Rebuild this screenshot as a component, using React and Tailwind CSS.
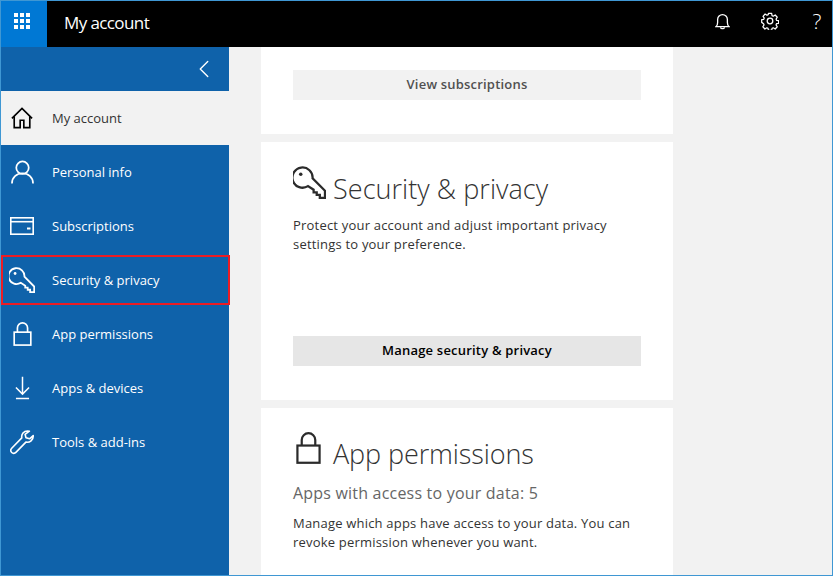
import { ChevronLeft } from "lucide-react";

const HomeIcon = ({ className }) => (
    <svg viewBox="0 0 24 24" className={className} fill="none" stroke="currentColor" strokeWidth="1.8">
        <path d="M1 12.5 12 1.500l11 11" />
        <path d="M3.500 10v12.500h6.500v-8h4v8h6.500V10" />
    </svg>
);

const UserIcon = ({ className }) => (
    <svg viewBox="0 0 24 24" className={className} fill="none" stroke="currentColor" strokeWidth="1.8">
        <circle cx="12" cy="7.500" r="6.500" />
        <path d="M1 24c0-6.500 4.800-10.500 11-10.500S23 17.500 23 24" />
    </svg>
);

const CardIcon = ({ className }) => (
    <svg viewBox="0 0 24 18" className={className} fill="none" stroke="currentColor" strokeWidth="1.6">
        <rect x="0.8" y="0.8" width="22.4" height="16.4" />
        <path d="M1 4.700h22" />
        <path d="M17 11.500h3.500" strokeWidth="2" />
    </svg>
);

const KeyIcon = ({ className }) => (
    <svg viewBox="0 0 32 32" className={className} fill="none" stroke="currentColor" strokeWidth="2.2">
        <path d="M14.500 19.500A9.800 9.800 0 1 1 19 12L31 24V31H26V28H23V25.500H20V23Z" />
        <circle cx="7.500" cy="8" r="1.700" fill="currentColor" stroke="none" />
    </svg>
);

const LockIcon = ({ className }) => (
    <svg viewBox="0 0 20 26" className={className} fill="none" stroke="currentColor" strokeWidth="1.8">
        <rect x="1" y="11" width="18" height="14" />
        <path d="M4.500 11V6.500a5.500 5.500 0 0 1 11 0V11" />
    </svg>
);

const DownloadIcon = ({ className }) => (
    <svg viewBox="0 0 16 24" className={className} fill="none" stroke="currentColor" strokeWidth="1.6">
        <path d="M8 0v18.500" />
        <path d="M1 11.500l7 7 7-7" />
        <path d="M1 23.200h14" />
    </svg>
);

const WrenchIcon = ({ className }) => (
    <svg viewBox="0 0 25 25" className={className} fill="none" stroke="currentColor" strokeWidth="1.6" strokeLinejoin="round">
        <path d="M17.500 1c-3.700 0-6.400 3.200-5.700 6.900L1.700 18.300c-1.200 1.300-1.100 3.100 0 4.200 1.200 1.200 3 1.100 4.200-.1l10-10.300c3.800.9 7.600-2.200 7.300-6.500l-3.600 3.200-3.600-1.100-.9-3.400L19.400 1.200c-.6-.2-1.200-.2-1.900-.2Z" />
    </svg>
);

const BellIcon = ({ className }) => (
    <svg viewBox="0 0 16 18" className={className} fill="none" stroke="currentColor" strokeWidth="1.4">
        <path d="M1 14.500c1.300-1 1.800-2.400 1.800-4.500V6.800a5.200 5.200 0 0 1 10.400 0V10c0 2.100.5 3.500 1.800 4.500Z" />
        <path d="M6 15c0 2.200 4 2.200 4 0" />
    </svg>
);

const GearIcon = ({ className }) => (
    <svg viewBox="0 0 18 18" className={className} fill="none" stroke="currentColor" strokeWidth="1.3" strokeLinejoin="round">
        <circle cx="9" cy="9" r="2.800" />
        <path d="M7.300 1h3.400l.4 2.300 1.300.6 2-1.300 2.200 2.400-1.300 1.900.5 1.300 2.200.4v2.800l-2.200.4-.5 1.300 1.300 1.900-2.200 2.400-2-1.300-1.300.6-.4 2.200H7.300l-.4-2.200-1.300-.6-2 1.300-2.200-2.400 1.300-1.900-.5-1.300L.2 10.400V7.600l2.200-.4.5-1.300L1.600 4 3.800 1.600l2 1.300 1.300-.6Z" transform="translate(.5 .5) scale(.95)" />
    </svg>
);

const navItems = [
    { label: "Personal info", icon: UserIcon, size: "w-[23px] h-[24px]" },
    { label: "Subscriptions", icon: CardIcon, size: "w-[24px] h-[18px]" },
    { label: "Security & privacy", icon: KeyIcon, size: "w-[26px] h-[26px]", marked: true },
    { label: "App permissions", icon: LockIcon, size: "w-[19px] h-[24px]" },
    { label: "Apps & devices", icon: DownloadIcon, size: "w-[15px] h-[24px]" },
    { label: "Tools & add-ins", icon: WrenchIcon, size: "w-[25px] h-[25px]" },
];

const App = () => {
    return (
        <div
            className="w-[833px] h-[576px] overflow-hidden flex flex-col border border-[#3f97d3] bg-[#f2f2f2] text-[#333]"
            style={{ fontFamily: '"Open Sans", "Noto Sans", sans-serif' }}
        >
            {/* Top bar */}
            <header className="h-[46px] shrink-0 bg-black text-white flex items-center">
                <div className="w-[46px] h-full bg-[#0078d4] flex items-center justify-center pr-[4px] pb-[6px]">
                    <div className="grid grid-cols-3 gap-[2px]">
                        {Array.from({ length: 9 }).map((_, i) => (
                            <span key={i} className="size-[4px] bg-white" />
                        ))}
                    </div>
                </div>
                <span className="ml-[17px] pb-[3px] text-[17px] tracking-[-0.6px]">My account</span>
                <div className="ml-auto flex items-center pb-[6px]">
                    <BellIcon className="w-[15px] h-[17px] mr-[31px]" />
                    <GearIcon className="w-[18px] h-[18px] mr-[32px]" />
                    <span className="w-[12px] mr-[9px] text-[21px] font-light leading-none text-center">?</span>
                </div>
            </header>

            <div className="flex flex-1 min-h-0">
                {/* Sidebar */}
                <aside className="w-[228px] shrink-0 bg-[#0f62aa] text-white">
                    <div className="h-[44px] flex items-center justify-end pr-[10px]">
                        <ChevronLeft className="size-[30px]" strokeWidth={1.1} />
                    </div>
                    <div className="h-[54px] bg-[#f2f2f2] text-[#333] flex items-center text-[13px]">
                        <span className="w-[51px] flex justify-center pr-[9px]">
                            <HomeIcon className="w-[22px] h-[22px] text-black" />
                        </span>
                        <span className="pt-[1px]">My account</span>
                    </div>
                    {navItems.map((item) => {
                        const Icon = item.icon;
                        return (
                            <div key={item.label} className="relative h-[54px] flex items-center text-[13px]">
                                <span className="w-[51px] flex justify-center pr-[9px]">
                                    <Icon className={item.size} />
                                </span>
                                <span className="pt-[1px]">{item.label}</span>
                                {item.marked && (
                                    <div className="absolute left-0 -right-px top-[2px] bottom-[2px] border-2 border-[#ed1c24]" />
                                )}
                            </div>
                        );
                    })}
                </aside>

                {/* Main column */}
                <main className="flex-1 min-w-0 pl-[32px]">
                    <div className="w-[412px] flex flex-col gap-[8px]">
                        <section className="bg-white h-[87px] px-[32px] pt-[23px]">
                            <div className="h-[30px] bg-[#f2f2f2] flex items-center justify-center text-[13px] font-semibold text-[#505050] tracking-[0.2px]">
                                View subscriptions
                            </div>
                        </section>

                        <section className="bg-white h-[258px] px-[32px] pt-[24px] flex flex-col">
                            <div className="flex items-start h-[36px]">
                                <KeyIcon className="w-[33px] h-[33px] text-[#2b2b2b]" />
                                <h2 className="ml-[7px] mt-[5px] text-[27px] leading-[36px] font-light tracking-[0.05px]">Security &amp; privacy</h2>
                            </div>
                            <p className="mt-[14px] text-[13px] leading-[19px] tracking-[0.2px]">
                                Protect your account and adjust important privacy settings to your preference.
                            </p>
                            <div className="mt-auto mb-[34px] h-[30px] bg-[#e6e6e6] flex items-center justify-center text-[13px] font-semibold text-black tracking-[0.2px]">
                                Manage security &amp; privacy
                            </div>
                        </section>

                        <section className="bg-white h-[167px] px-[32px] pt-[24px]">
                            <div className="flex items-start h-[36px]">
                                <LockIcon className="w-[25px] h-[32px] ml-[3px] text-[#2b2b2b]" />
                                <h2 className="ml-[12px] mt-[4px] text-[27px] leading-[36px] font-light tracking-[-0.1px]">App permissions</h2>
                            </div>
                            <p className="mt-[14px] text-[16px] leading-[22px] text-[#666] tracking-[0.2px]">Apps with access to your data: 5</p>
                            <p className="mt-[10px] text-[13px] leading-[19px] tracking-[0.2px]">
                                Manage which apps have access to your data. You can revoke permission whenever you want.
                            </p>
                        </section>
                    </div>
                </main>
            </div>
        </div>
    );
};

export default App;
